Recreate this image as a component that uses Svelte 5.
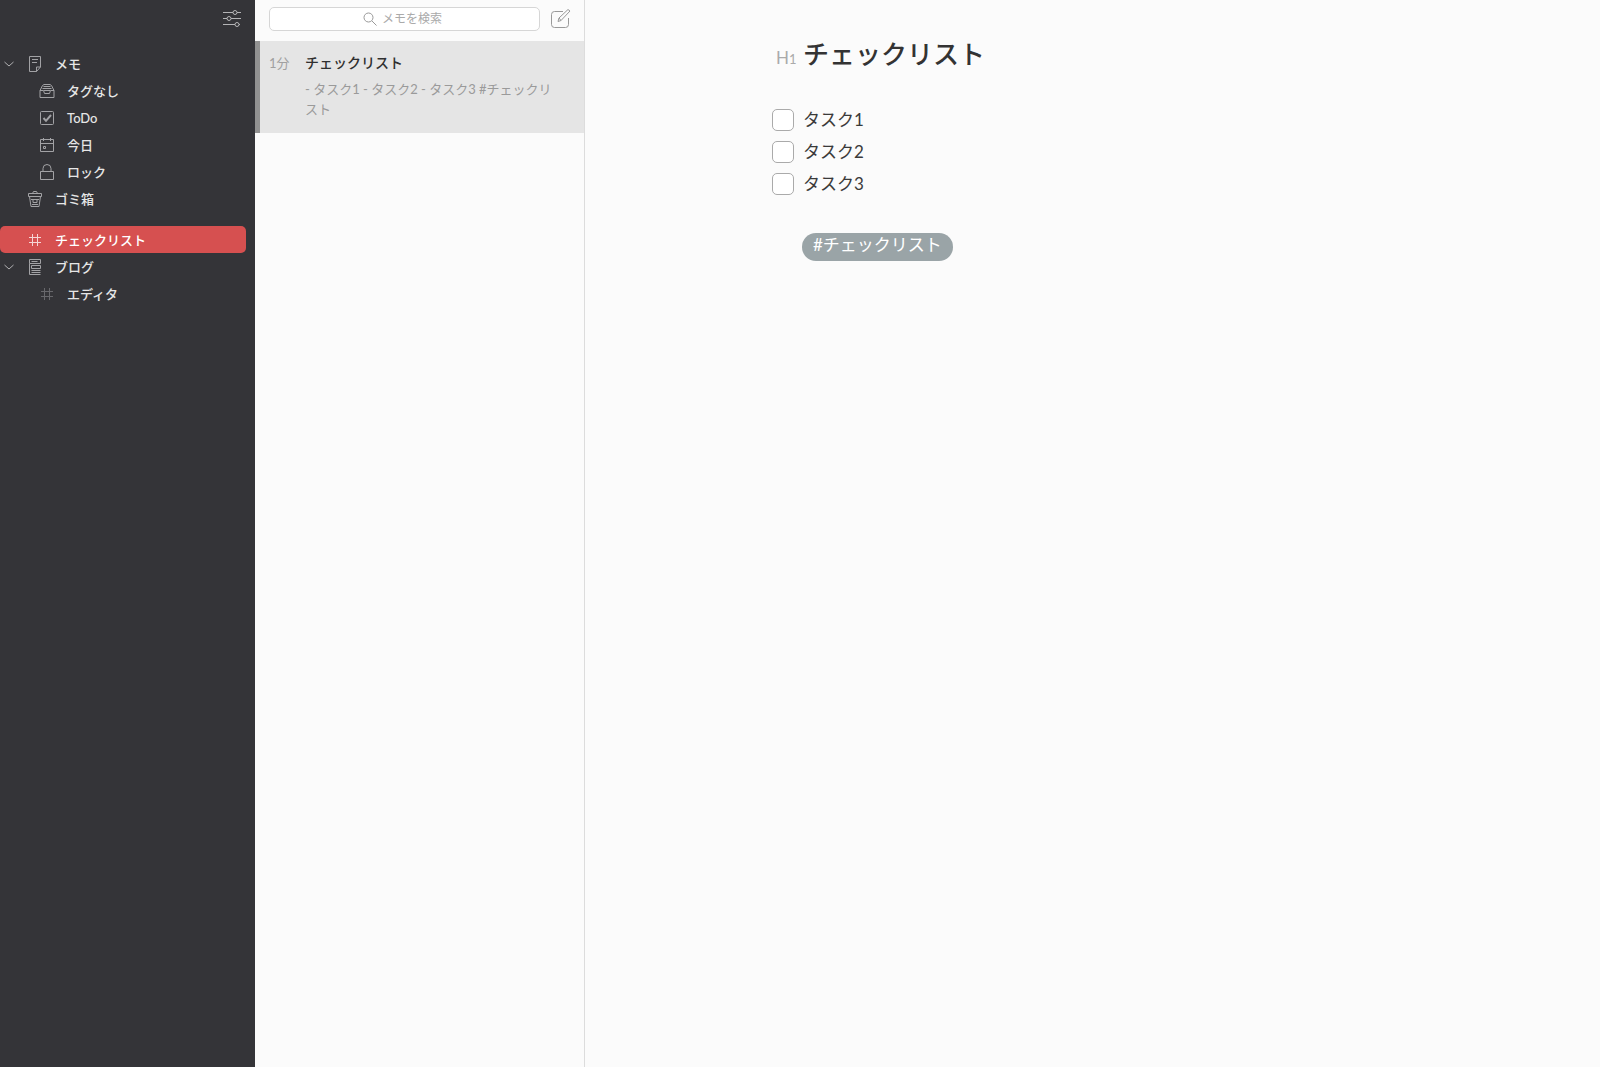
<script lang="ts">
  type Item = { label: string; icon: string; depth?: number; open?: boolean; gap?: boolean };

  const items: Item[] = [
    { label: "メモ", icon: "note", open: true },
    { label: "タグなし", icon: "inbox", depth: 1 },
    { label: "ToDo", icon: "todo", depth: 1 },
    { label: "今日", icon: "today", depth: 1 },
    { label: "ロック", icon: "lock", depth: 1 },
    { label: "ゴミ箱", icon: "trash" },
    { label: "チェックリスト", icon: "hash", gap: true },
    { label: "ブログ", icon: "blog", open: true },
    { label: "エディタ", icon: "dimhash", depth: 1 },
  ];

  let selected = $state("チェックリスト");
  let query = $state("");
  let tasks = $state([
    { label: "タスク1", done: false },
    { label: "タスク2", done: false },
    { label: "タスク3", done: false },
  ]);
</script>

{#snippet glyph(name: string)}
  <svg class="glyph" class:dim={name === "dimhash"} viewBox="0 0 16 16" aria-hidden="true">
    {#if name === "note"}
      <path d="M2.5.5h11v10.500l-4 4.500h-7zM9.500 15.500v-4.500h4M5 3.500h6M5 6.500h5" />
    {:else if name === "inbox"}
      <path d="M1 7.500v7h14v-7L12.500 2.500 11 1.500H5L3.500 2.500zM1 7.500h3.500l1 3h5l1-3H15M3.500 5.500h9M4.500 3.500h7M5 7.500h6" />
    {:else if name === "todo"}
      <rect x="1.5" y="1.5" width="13" height="13" rx="1" />
      <path class="tick" d="M4.500 8l2.500 2.800 5-5.800" />
    {:else if name === "today"}
      <path d="M1.500 2.500h13v12h-13zM1.500 6.500h13M4.500 1v3M11.500 1v3M4.500 9.500h2v2h-2z" />
    {:else if name === "lock"}
      <path d="M1.500 7.500h13v8h-13zM4 7.500V4.500a4 4 0 0 1 8 0v3" />
    {:else if name === "trash"}
      <path d="M1.500 2.500h13v3h-13zM5.500 2.500l1-2h3l1 2M2.500 5.500l1.500 10h8l1.500-10M4 8.500h8M6 8.500v3h4v-3M5 13.500h6" />
    {:else if name === "blog"}
      <path d="M2.500.500h11v4h-11zM2.500 4.500v11M4.500 2.500h6M4.500 6.500h9v3h-9zM4.500 11.500h9M4.500 13.500h9M2.500 15.500h11" />
    {:else}
      <path d="M5.500 2v12M10.500 2v12M2 5.500h12M2 10.500h12" />
    {/if}
  </svg>
{/snippet}

<div class="app">
  <nav class="sidebar" aria-label="タグ">
    <div class="side-top">
      <button class="icon-btn" aria-label="設定">
        <svg width="18" height="18" viewBox="0 0 18 18">
          <path d="M0 3.500h10M14 3.500h4M0 9.500h4M8 9.500h10M0 15.500h12M16 15.500h1" />
          <circle cx="12" cy="3.500" r="2" /><circle cx="6" cy="9.500" r="2" /><circle cx="14" cy="15.500" r="2" />
        </svg>
      </button>
    </div>
    <ul>
      {#each items as item}
        <li class:gap={item.gap}>
          <button class="row" class:child={item.depth} class:selected={selected === item.label}
                  onclick={() => (selected = item.label)}>
            <span class="arrow">
              {#if item.open}
                <svg width="10" height="6" viewBox="0 0 10 6"><path d="M.500 1l4.500 4 4.500-4" /></svg>
              {/if}
            </span>
            {@render glyph(item.icon)}
            <span>{item.label}</span>
          </button>
        </li>
      {/each}
    </ul>
  </nav>

  <section class="notes">
    <div class="toolbar">
      <label class="search">
        <svg width="14" height="14" viewBox="0 0 14 14"><circle cx="5.500" cy="5.500" r="4.500" /><path d="M9 9l4.500 4.500" /></svg>
        <input type="text" placeholder="メモを検索" aria-label="メモを検索" bind:value={query} />
      </label>
      <button class="icon-btn" aria-label="新規メモ">
        <svg width="20" height="20" viewBox="0 0 20 20">
          <path d="M12 2.500H3.500a3 3 0 0 0-3 3v10a3 3 0 0 0 3 3h11a3 3 0 0 0 3-3V9" />
          <path d="M7 12.500l1-3.500L17 .500l2 1.500-9 9.500zM8 9l2 2.500" />
        </svg>
      </button>
    </div>
    <button class="note">
      <span class="time">1分</span>
      <span class="note-text">
        <span class="note-title">チェックリスト</span>
        <span class="preview">- タスク1 - タスク2 - タスク3 #チェックリスト</span>
      </span>
    </button>
  </section>

  <main class="editor">
    <div class="heading">
      <span class="marker">H<small>1</small></span>
      <h1>チェックリスト</h1>
    </div>
    <div class="tasks">
      {#each tasks as task}
        <label class="task">
          <input type="checkbox" bind:checked={task.done} />
          <span>{task.label}</span>
        </label>
      {/each}
    </div>
    <a class="tag" href="#checklist">#チェックリスト</a>
  </main>
</div>

<style>
  :global(body) { margin: 0; background: #fbfbfb; }
  .app {
    display: grid; grid-template-columns: 255px 330px 1fr; min-height: 100vh;
    font-family: Lato, "Noto Sans CJK JP", sans-serif; color: #3a3a3a; background: #fbfbfb;
  }
  button { font: inherit; color: inherit; background: none; border: 0; padding: 0; cursor: pointer; text-align: left; }
  svg { display: block; flex: none; fill: none; stroke: currentColor; stroke-width: 1; }

  .sidebar { background: #343438; color: #e6e6e6; }
  .side-top { display: flex; justify-content: flex-end; box-sizing: border-box; height: 50px; padding: 8px 14px 0 0; color: #b4b4b6; }
  .icon-btn { display: block; height: 20px; }
  ul { list-style: none; margin: 0; padding: 0; }
  .gap { margin-top: 14px; }
  .row {
    display: flex; align-items: center; box-sizing: border-box; width: calc(100% - 9px); height: 27px;
    padding-left: 4px; font-size: 13px; line-height: 20px; font-weight: 500; border-radius: 5px;
  }
  .row.selected { background: #d65050; color: #fff; }
  .arrow { width: 23px; color: #b0b0b2; }
  .child .arrow { width: 35px; }
  .glyph { width: 16px; height: 16px; margin-right: 12px; color: #a2a2a5; }
  .selected .glyph { color: #f6d4d4; }
  .glyph.dim { color: #68686c; }
  .tick { stroke-width: 2; }

  .notes { border-right: 1px solid #dcdcdc; box-sizing: border-box; }
  .toolbar { display: flex; align-items: center; box-sizing: border-box; height: 41px; padding: 0 13px 4px 14px; gap: 11px; color: #999; }
  .search {
    display: flex; flex: 1; align-items: center; justify-content: center; gap: 5px; box-sizing: border-box;
    height: 24px; min-width: 0; background: #fff; border: 1px solid #d6d6d6; border-radius: 5px;
  }
  .search input { width: 64px; padding: 0; border: 0; outline: 0; background: none; font: inherit; font-size: 12px; color: #555; }
  .search input::placeholder { color: #aaa; opacity: 1; }
  .note {
    display: flex; box-sizing: border-box; width: 100%; min-height: 92px; padding: 10px 25px 12px 9px;
    background: #e5e5e5; border-left: 5px solid #919191;
  }
  .time { width: 36px; flex: none; font-size: 13px; line-height: 24px; color: #a0a0a0; }
  .note-text { display: flex; flex-direction: column; gap: 4px; }
  .note-title { font-size: 14px; line-height: 24px; font-weight: 500; color: #303030; }
  .preview { font-size: 13px; line-height: 20px; color: #9a9a9a; }

  .editor { padding: 34px 40px 40px 187px; }
  .heading { display: flex; align-items: baseline; }
  .marker { width: 27px; padding-left: 4px; font-size: 17px; color: #aaa; }
  small { font-size: 13px; }
  h1 { margin: 0; font-size: 26px; line-height: 40px; font-weight: 500; color: #333; }
  .tasks { margin-top: 30px; }
  .task { display: flex; align-items: center; width: max-content; height: 32px; gap: 9px; font-size: 17px; line-height: 28px; }
  .task input {
    appearance: none; box-sizing: border-box; width: 22px; height: 22px; margin: 0;
    background: #fff; border: 1px solid #aaa; border-radius: 5px;
  }
  .task input:checked { background: #d65050; }
  .tag {
    display: inline-block; height: 28px; margin: 33px 0 0 30px; padding: 0 11px; border-radius: 14px;
    font-size: 17px; line-height: 24px; color: #fff; background: #9aa4a7; text-decoration: none;
  }
</style>
